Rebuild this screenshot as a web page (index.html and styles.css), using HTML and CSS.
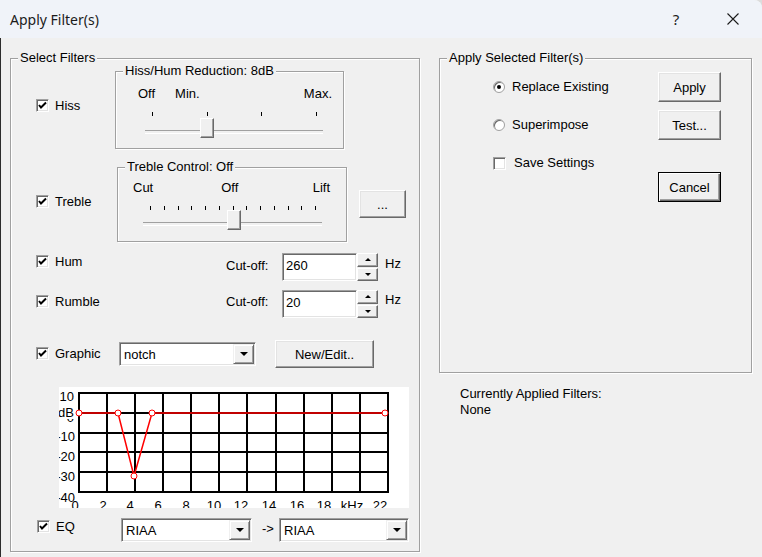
FILE: index.html
```html
<!DOCTYPE html>
<html lang="en">
<head>
  <meta charset="UTF-8" />
  <title>Apply Filter(s)</title>
  <link rel="stylesheet" href="styles.css">
</head>
<body>

  <div class="window">
    <div class="titlebar">
      <span class="title">Apply Filter(s)</span>
      <span class="help">?</span>
      <svg class="close" width="12" height="12" viewBox="0 0 12 12">
        <path d="M0.5 0.5 L11.5 11.5 M11.5 0.5 L0.5 11.5" stroke="#1b1b1b" stroke-width="1.1" fill="none"/>
      </svg>
    </div>

    <div class="client">

      <!-- left: filter selection -->
      <div class="group select-filters">
        <span class="group-title">Select Filters</span>

        <div class="row row-hiss">
          <label class="check-item">
            <span class="checkbox"><svg width="11" height="11" viewBox="0 0 11 11"><polyline points="2,5 4,7.5 9,2.5" fill="none" stroke="#000" stroke-width="2"/></svg></span>
            Hiss
          </label>
          <div class="group hiss-box">
            <span class="group-title">Hiss/Hum Reduction: 8dB</span>
            <div class="scale-labels">
              <span>Off</span><span class="lbl-mid">Min.</span><span class="lbl-end">Max.</span>
            </div>
            <div class="slider">
              <div class="ticks"><i></i><i></i><i></i><i></i></div>
              <div class="rail"><span class="thumb"></span></div>
            </div>
          </div>
        </div>

        <div class="row row-treble">
          <label class="check-item">
            <span class="checkbox"><svg width="11" height="11" viewBox="0 0 11 11"><polyline points="2,5 4,7.5 9,2.5" fill="none" stroke="#000" stroke-width="2"/></svg></span>
            Treble
          </label>
          <div class="group treble-box">
            <span class="group-title">Treble Control: Off</span>
            <div class="scale-labels">
              <span>Cut</span><span class="lbl-mid">Off</span><span class="lbl-end">Lift</span>
            </div>
            <div class="slider">
              <div class="ticks"><i></i><i></i><i></i><i></i><i></i><i></i><i></i><i></i><i></i><i></i><i></i><i></i><i></i></div>
              <div class="rail"><span class="thumb"></span></div>
            </div>
          </div>
          <button class="btn dots-btn">...</button>
        </div>

        <div class="row row-hum">
          <label class="check-item">
            <span class="checkbox"><svg width="11" height="11" viewBox="0 0 11 11"><polyline points="2,5 4,7.5 9,2.5" fill="none" stroke="#000" stroke-width="2"/></svg></span>
            Hum
          </label>
          <span class="cutoff">Cut-off:</span>
          <div class="edit">260</div>
          <div class="spin">
            <span class="spin-btn"><i class="tri-up"></i></span>
            <span class="spin-btn"><i class="tri-down"></i></span>
          </div>
          <span class="hz">Hz</span>
        </div>

        <div class="row row-rumble">
          <label class="check-item">
            <span class="checkbox"><svg width="11" height="11" viewBox="0 0 11 11"><polyline points="2,5 4,7.5 9,2.5" fill="none" stroke="#000" stroke-width="2"/></svg></span>
            Rumble
          </label>
          <span class="cutoff">Cut-off:</span>
          <div class="edit">20</div>
          <div class="spin">
            <span class="spin-btn"><i class="tri-up"></i></span>
            <span class="spin-btn"><i class="tri-down"></i></span>
          </div>
          <span class="hz">Hz</span>
        </div>

        <div class="row row-graphic">
          <label class="check-item">
            <span class="checkbox"><svg width="11" height="11" viewBox="0 0 11 11"><polyline points="2,5 4,7.5 9,2.5" fill="none" stroke="#000" stroke-width="2"/></svg></span>
            Graphic
          </label>
          <div class="combo combo-notch">
            <span class="combo-text">notch</span>
            <span class="combo-btn"><i class="tri-drop"></i></span>
          </div>
          <button class="btn edit-btn">New/Edit..</button>
        </div>

        <svg class="chart" width="350" height="121" viewBox="0 0 350 121">
          <rect x="0" y="0" width="350" height="121" fill="#fff"/>
          <g stroke="#000" stroke-width="2" fill="none">
            <rect x="20" y="6" width="309" height="99"/>
            <path d="M48 6V105 M76 6V105 M104 6V105 M132 6V105 M160 6V105 M188 6V105 M217 6V105 M245 6V105 M273 6V105 M301 6V105"/>
            <path d="M20 26H329 M20 46H329 M20 65H329 M20 85H329"/>
          </g>
          <g font-family="Liberation Sans, Arial, sans-serif" font-size="13" fill="#000">
            <text x="15" y="14" text-anchor="end">10</text>
            <text x="15" y="35" text-anchor="end">0</text>
            <rect x="0" y="17" width="16" height="15" fill="#fff"/>
            <text x="15" y="30" text-anchor="end">dB</text>
            <text x="16" y="54" text-anchor="end">-10</text>
            <text x="16" y="74" text-anchor="end">-20</text>
            <text x="16" y="94" text-anchor="end">-30</text>
            <text x="16" y="115" text-anchor="end">-40</text>
            <text x="16" y="123" text-anchor="middle">0</text>
            <text x="44" y="123" text-anchor="middle">2</text>
            <text x="71" y="123" text-anchor="middle">4</text>
            <text x="99" y="123" text-anchor="middle">6</text>
            <text x="127" y="123" text-anchor="middle">8</text>
            <text x="155" y="123" text-anchor="middle">10</text>
            <text x="182" y="123" text-anchor="middle">12</text>
            <text x="210" y="123" text-anchor="middle">14</text>
            <text x="238" y="123" text-anchor="middle">16</text>
            <text x="265" y="123" text-anchor="middle">18</text>
            <text x="293" y="123" text-anchor="middle">kHz</text>
            <text x="321" y="123" text-anchor="middle">22</text>
          </g>
          <polyline points="20,26 59,26 75,89 93,26 326,26" fill="none" stroke="#f00" stroke-width="1.5"/>
          <g fill="#fff" stroke="#f00" stroke-width="1">
            <circle cx="20" cy="26" r="3"/>
            <circle cx="59" cy="26" r="3"/>
            <circle cx="75" cy="89" r="3"/>
            <circle cx="93" cy="26" r="3"/>
            <circle cx="326" cy="26" r="3"/>
          </g>
        </svg>

        <div class="row row-eq">
          <label class="check-item">
            <span class="checkbox"><svg width="11" height="11" viewBox="0 0 11 11"><polyline points="2,5 4,7.5 9,2.5" fill="none" stroke="#000" stroke-width="2"/></svg></span>
            EQ
          </label>
          <div class="combo combo-eq1">
            <span class="combo-text">RIAA</span>
            <span class="combo-btn"><i class="tri-drop"></i></span>
          </div>
          <span class="arrow">-&gt;</span>
          <div class="combo combo-eq2">
            <span class="combo-text">RIAA</span>
            <span class="combo-btn"><i class="tri-drop"></i></span>
          </div>
        </div>
      </div>

      <!-- right: apply options -->
      <div class="right-col">
        <div class="group apply-group">
          <span class="group-title">Apply Selected Filter(s)</span>
          <div class="apply-body">
            <div class="options">
              <label class="opt-row"><span class="radio on"></span>Replace Existing</label>
              <label class="opt-row"><span class="radio"></span>Superimpose</label>
              <label class="check-item save-row"><span class="checkbox"></span>Save Settings</label>
            </div>
            <div class="buttons">
              <button class="btn">Apply</button>
              <button class="btn test-btn">Test...</button>
              <button class="btn cancel-btn">Cancel</button>
            </div>
          </div>
        </div>
        <div class="current">
          Currently Applied Filters:<br>
          None
        </div>
      </div>

    </div>
  </div>

</body>
</html>
```

FILE: styles.css
```css
* {
  box-sizing: border-box;
}

body {
  margin: 0;
  background: #dcdcdc;
  font-family: "Liberation Sans", Arial, sans-serif;
  font-size: 13px;
  color: #000;
}

.window {
  width: 762px;
  height: 557px;
  background: #f0f0f0;
  border-top-right-radius: 8px;
  overflow: hidden;
  display: flex;
  flex-direction: column;
}

.titlebar {
  height: 38px;
  flex: none;
  background: #f0f3f9;
  display: flex;
  align-items: center;
  padding-left: 10px;
  font-family: "Noto Sans", "Open Sans", sans-serif;
  font-size: 14px;
  color: #1b1b1b;
}

.title {
  flex: 1;
}

.help {
  width: 10px;
  text-align: center;
  margin-right: 46px;
  font-size: 15px;
}

.close {
  margin-right: 23px;
}

.client {
  flex: 1;
  display: flex;
  align-items: flex-start;
  padding: 20px 0 0 9px;
  border-left: 1px solid #2d2d2d;
}

/* etched group boxes */
.group {
  position: relative;
  border: 1px solid #a0a0a0;
  box-shadow: inset 1px 1px 0 #fff, 1px 1px 0 #fff;
}

.group-title {
  position: absolute;
  top: -9px;
  left: 7px;
  padding: 0 2px;
  line-height: 16px;
  background: #f0f0f0;
  white-space: nowrap;
}

.select-filters {
  width: 410px;
  height: 494px;
}

.row {
  display: flex;
  align-items: flex-start;
}

.check-item {
  display: flex;
  align-items: center;
  gap: 6px;
  height: 13px;
  line-height: 16px;
  white-space: nowrap;
}

.checkbox {
  width: 13px;
  height: 13px;
  flex: none;
  display: flex;
  align-items: center;
  justify-content: center;
  background: #fff;
  border: 1px solid;
  border-color: #a0a0a0 #fff #fff #a0a0a0;
  box-shadow: inset 1px 1px 0 #696969, inset -1px -1px 0 #e3e3e3;
}

.checkbox svg {
  display: block;
}

/* hiss */
.row-hiss {
  margin-top: 12px;
}

.row-hiss .check-item {
  margin: 28px 0 0 25px;
  width: 79px;
}

.hiss-box {
  width: 229px;
  height: 78px;
}

.scale-labels {
  display: flex;
  line-height: 16px;
}

.lbl-end {
  margin-left: auto;
}

.hiss-box .scale-labels {
  margin-top: 14px;
  padding: 0 11px 0 22px;
}

.hiss-box .lbl-mid {
  margin-left: 20px;
}

.slider {
  position: relative;
}

.ticks {
  display: flex;
  justify-content: space-between;
  height: 4px;
  padding: 0 6px 0 7px;
}

.ticks i {
  width: 1px;
  height: 4px;
  background: #000;
}

.rail {
  position: relative;
  height: 20px;
}

.rail::before {
  content: "";
  position: absolute;
  left: 0;
  right: 0;
  top: 12px;
  height: 2px;
  border-top: 1px solid #a0a0a0;
  border-bottom: 1px solid #fff;
}

.thumb {
  position: absolute;
  top: 0;
  width: 14px;
  height: 20px;
  background: #f0f0f0;
  border: 1px solid;
  border-color: #fff #696969 #696969 #fff;
  box-shadow: inset -1px -1px 0 #a0a0a0;
}

.hiss-box .slider {
  margin: 10px 0 0 29px;
  width: 178px;
}

.hiss-box .rail {
  margin-top: 2px;
}

.hiss-box .thumb {
  left: 55px;
}

/* treble */
.row-treble {
  margin-top: 18px;
}

.row-treble .check-item {
  margin: 28px 0 0 25px;
  width: 81px;
}

.treble-box {
  width: 230px;
  height: 75px;
}

.treble-box .scale-labels {
  margin-top: 12px;
  padding: 0 16px 0 15px;
}

.treble-box .lbl-mid {
  margin-left: 68px;
}

.treble-box .slider {
  margin: 10px 0 0 25px;
  width: 179px;
}

.treble-box .thumb {
  left: 84px;
}

/* buttons */
.btn {
  font-family: inherit;
  font-size: 13px;
  color: #000;
  padding: 0;
  background: #f0f0f0;
  border: 1px solid;
  border-color: #fff #696969 #696969 #fff;
  box-shadow: inset -1px -1px 0 #a0a0a0, inset 1px 1px 0 #e3e3e3;
  border-radius: 0;
}

.dots-btn {
  margin: 23px 0 0 12px;
  width: 47px;
  height: 28px;
}

/* hum / rumble */
.row-hum {
  margin-top: 11px;
}

.row-rumble {
  margin-top: 9px;
}

.row-hum .check-item,
.row-rumble .check-item {
  margin-left: 25px;
  width: 190px;
}

.row-hum .check-item {
  margin-top: 2px;
}

.row-rumble .check-item {
  margin-top: 5px;
}

.cutoff {
  width: 56px;
  line-height: 16px;
}

.row-hum .cutoff {
  margin-top: 5px;
}

.row-rumble .cutoff {
  margin-top: 4px;
}

.edit {
  width: 75px;
  height: 28px;
  padding-left: 3px;
  line-height: 24px;
  background: #fff;
  border: 1px solid;
  border-color: #a0a0a0 #fff #fff #a0a0a0;
  box-shadow: inset 1px 1px 0 #696969, inset -1px -1px 0 #e3e3e3;
}

.spin {
  width: 21px;
  height: 28px;
  display: flex;
  flex-direction: column;
  gap: 1px;
}

.spin-btn {
  flex: 1;
  display: flex;
  align-items: center;
  justify-content: center;
  background: #f0f0f0;
  border: 1px solid;
  border-color: #fff #696969 #696969 #fff;
  box-shadow: inset -1px -1px 0 #a0a0a0;
}

.tri-up {
  border-left: 3px solid transparent;
  border-right: 3px solid transparent;
  border-bottom: 3px solid #000;
}

.tri-down {
  border-left: 3px solid transparent;
  border-right: 3px solid transparent;
  border-top: 3px solid #000;
}

.tri-drop {
  border-left: 4px solid transparent;
  border-right: 4px solid transparent;
  border-top: 4px solid #000;
}

.hz {
  margin-left: 7px;
  line-height: 16px;
}

.row-hum .hz {
  margin-top: 3px;
}

.row-rumble .hz {
  margin-top: 2px;
}

/* graphic */
.row-graphic {
  margin-top: 22px;
}

.row-graphic .check-item {
  margin: 7px 0 0 25px;
  width: 83px;
}

.combo {
  display: flex;
  align-items: center;
  height: 24px;
  background: #fff;
  border: 1px solid;
  border-color: #a0a0a0 #fff #fff #a0a0a0;
  box-shadow: inset 1px 1px 0 #696969, inset -1px -1px 0 #e3e3e3;
  padding: 1px 1px 1px 2px;
}

.combo-text {
  flex: 1;
  padding-left: 2px;
}

.combo-btn {
  width: 21px;
  height: 20px;
  display: flex;
  align-items: center;
  justify-content: center;
  background: #f0f0f0;
  border: 1px solid;
  border-color: #f0f0f0 #696969 #696969 #f0f0f0;
  box-shadow: inset 1px 1px 0 #fff, inset -1px -1px 0 #a0a0a0;
}

.combo-notch {
  width: 137px;
  margin-top: 2px;
}

.edit-btn {
  margin-left: 19px;
  width: 99px;
  height: 28px;
}

/* chart */
.chart {
  display: block;
  margin: 19px 0 0 48px;
}

/* eq */
.row-eq {
  margin-top: 10px;
}

.row-eq .check-item {
  margin: 2px 0 0 26px;
  width: 84px;
}

.combo-eq1 {
  width: 131px;
}

.combo-eq2 {
  width: 130px;
}

.arrow {
  width: 27px;
  padding-left: 10px;
  margin-top: 3px;
  line-height: 16px;
}

/* right column */
.right-col {
  margin-left: 19px;
  width: 313px;
}

.apply-group {
  height: 315px;
}

.apply-body {
  display: flex;
  margin-top: 13px;
}

.options {
  margin-left: 53px;
  width: 165px;
}

.opt-row {
  display: flex;
  align-items: center;
  gap: 7px;
  height: 30px;
  line-height: 16px;
}

.opt-row + .opt-row {
  margin-top: 8px;
}

.radio {
  width: 12px;
  height: 12px;
  border-radius: 50%;
  display: flex;
  align-items: center;
  justify-content: center;
  background: #fff;
  border: 1px solid #a0a0a0;
  box-shadow: inset 1px 1px 0 #696969;
}

.radio.on::after {
  content: "";
  width: 4px;
  height: 4px;
  border-radius: 50%;
  background: #000;
}

.save-row {
  margin-top: 16px;
  height: 14px;
  gap: 8px;
}

.buttons {
  display: flex;
  flex-direction: column;
  width: 63px;
}

.buttons .btn {
  height: 30px;
}

.test-btn {
  margin-top: 8px;
}

.cancel-btn {
  margin-top: 32px;
  border: 1px solid #000;
  box-shadow: inset 1px 1px 0 #fff, inset -1px -1px 0 #696969, inset -2px -2px 0 #a0a0a0;
}

.current {
  margin-top: 13px;
  padding-left: 21px;
  line-height: 16px;
}
```
